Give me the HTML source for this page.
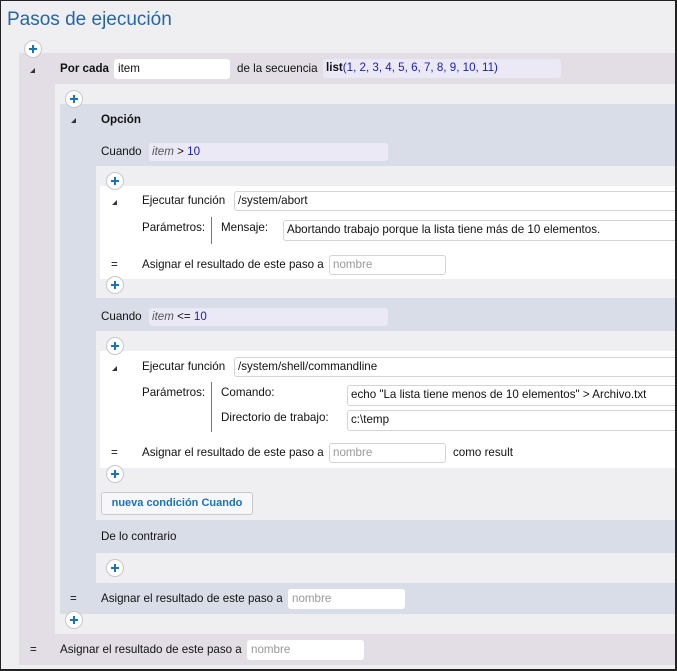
<!DOCTYPE html>
<html><head><meta charset="utf-8"><style>
*{margin:0;padding:0;box-sizing:border-box}
body{width:677px;height:671px;overflow:hidden;background:#efeff2;font-family:"Liberation Sans",sans-serif;font-size:11.6px;color:#111;position:relative}
.frame{position:absolute;left:0;top:0;width:677px;height:671px;border:1px solid #222;border-right:2px solid #222;border-bottom:2px solid #222;z-index:50;pointer-events:none}
.a{position:absolute}
.t{position:absolute;line-height:14px;white-space:nowrap}
.b{font-weight:bold}
.in{position:absolute;background:#fff;border:1px solid #d4d4d8;border-radius:3px;line-height:18px;padding-left:3px;white-space:nowrap;overflow:hidden}
.in.nb{border-color:#fff}
.ph{color:#999}
.pl{position:absolute;width:18px;height:18px;border-radius:50%;background:#fff;border:1px solid #c8c8cc;z-index:5}
.pl:before{content:"";position:absolute;left:4px;top:7px;width:8px;height:2px;background:#1a72bb}
.pl:after{content:"";position:absolute;left:7px;top:4px;width:2px;height:8px;background:#1a72bb}
.tri{position:absolute;width:0;height:0;border-left:5px solid transparent;border-bottom:5px solid #333}
.lv{position:absolute;background:#ece9f6;border-radius:3px;line-height:18px;padding-left:3px;white-space:nowrap}
.n{color:#1a1ad0}
</style></head><body>
<div class="frame"></div>
<div class="t" style="left:7px;top:9px;font-size:19px;line-height:22px;color:#2466a6">Pasos de ejecución</div>
<div class="pl" style="left:24px;top:40px"></div>
<div class="a" style="left:19px;top:53px;width:658px;height:612px;background:#e3dee5"></div>
<div class="a" style="left:55px;top:84px;width:622px;height:550px;background:#efeff2"></div>
<div class="tri" style="left:30px;top:68px"></div>
<div class="t b" style="left:60px;top:62px">Por cada</div>
<div class="in nb" style="left:114px;top:59px;width:116px;height:20px">item</div>
<div class="t" style="left:237px;top:62px">de la secuencia</div>
<div class="lv" style="left:323px;top:59px;width:238px;height:19px"><b>list</b><span class="n">(1, 2, 3, 4, 5, 6, 7, 8, 9, 10, 11)</span></div>
<div class="pl" style="left:65px;top:90px"></div>
<div class="a" style="left:60px;top:104px;width:617px;height:510px;background:#d9dde7"></div>
<div class="tri" style="left:71px;top:118px"></div>
<div class="t b" style="left:101px;top:113px">Opción</div>
<div class="t" style="left:101px;top:145px">Cuando</div>
<div class="lv" style="left:149px;top:143px;width:239px;height:18px"><i style="color:#555">item</i> &gt; <span class="n">10</span></div>
<div class="a" style="left:96px;top:166px;width:581px;height:132px;background:#efeff2"></div>
<div class="a" style="left:100px;top:186px;width:577px;height:93px;background:#fff"></div>
<div class="pl" style="left:106px;top:172px"></div>
<div class="tri" style="left:112px;top:200px"></div>
<div class="t" style="left:142px;top:194px">Ejecutar función</div>
<div class="in" style="left:234px;top:191px;width:445px;height:20px">/system/abort</div>
<div class="t" style="left:142px;top:221px">Parámetros:</div>
<div class="a" style="left:211px;top:217px;width:1px;height:27px;background:#777"></div>
<div class="t" style="left:221px;top:221px">Mensaje:</div>
<div class="in" style="left:283px;top:220px;width:396px;height:21px">Abortando trabajo porque la lista tiene más de 10 elementos.</div>
<div class="t" style="left:111px;top:258px">=</div>
<div class="t" style="left:142px;top:258px">Asignar el resultado de este paso a</div>
<div class="in ph" style="left:329px;top:255px;width:117px;height:20px">nombre</div>
<div class="pl" style="left:106px;top:276px"></div>
<div class="t" style="left:101px;top:310px">Cuando</div>
<div class="lv" style="left:149px;top:308px;width:239px;height:18px"><i style="color:#555">item</i> &lt;= <span class="n">10</span></div>
<div class="a" style="left:96px;top:331px;width:581px;height:189px;background:#efeff2"></div>
<div class="a" style="left:100px;top:351px;width:577px;height:117px;background:#fff"></div>
<div class="pl" style="left:106px;top:337px"></div>
<div class="tri" style="left:112px;top:366px"></div>
<div class="t" style="left:142px;top:360px">Ejecutar función</div>
<div class="in" style="left:234px;top:357px;width:445px;height:20px">/system/shell/commandline</div>
<div class="t" style="left:142px;top:386px">Parámetros:</div>
<div class="a" style="left:211px;top:382px;width:1px;height:50px;background:#777"></div>
<div class="t" style="left:221px;top:386px">Comando:</div>
<div class="in" style="left:347px;top:385px;width:332px;height:21px">echo "La lista tiene menos de 10 elementos" &gt; Archivo.txt</div>
<div class="t" style="left:221px;top:411px">Directorio de trabajo:</div>
<div class="in" style="left:347px;top:410px;width:332px;height:21px">c:\temp</div>
<div class="t" style="left:111px;top:446px">=</div>
<div class="t" style="left:142px;top:446px">Asignar el resultado de este paso a</div>
<div class="in ph" style="left:329px;top:443px;width:117px;height:20px">nombre</div>
<div class="t" style="left:453px;top:446px">como result</div>
<div class="pl" style="left:106px;top:465px"></div>
<div class="a" style="left:101px;top:492px;width:152px;height:23px;background:#f7f7f9;border:1px solid #c9c9cd;border-radius:3px;color:#1a72bb;font-weight:bold;font-size:11px;text-align:center;line-height:21px">nueva condición Cuando</div>
<div class="t" style="left:101px;top:530px">De lo contrario</div>
<div class="a" style="left:96px;top:553px;width:581px;height:30px;background:#efeff2"></div>
<div class="pl" style="left:106px;top:559px"></div>
<div class="t" style="left:70px;top:592px">=</div>
<div class="t" style="left:101px;top:592px">Asignar el resultado de este paso a</div>
<div class="in nb ph" style="left:288px;top:589px;width:117px;height:20px">nombre</div>
<div class="pl" style="left:65px;top:611px"></div>
<div class="t" style="left:30px;top:643px">=</div>
<div class="t" style="left:60px;top:643px">Asignar el resultado de este paso a</div>
<div class="in nb ph" style="left:247px;top:640px;width:117px;height:20px">nombre</div>
</body></html>
